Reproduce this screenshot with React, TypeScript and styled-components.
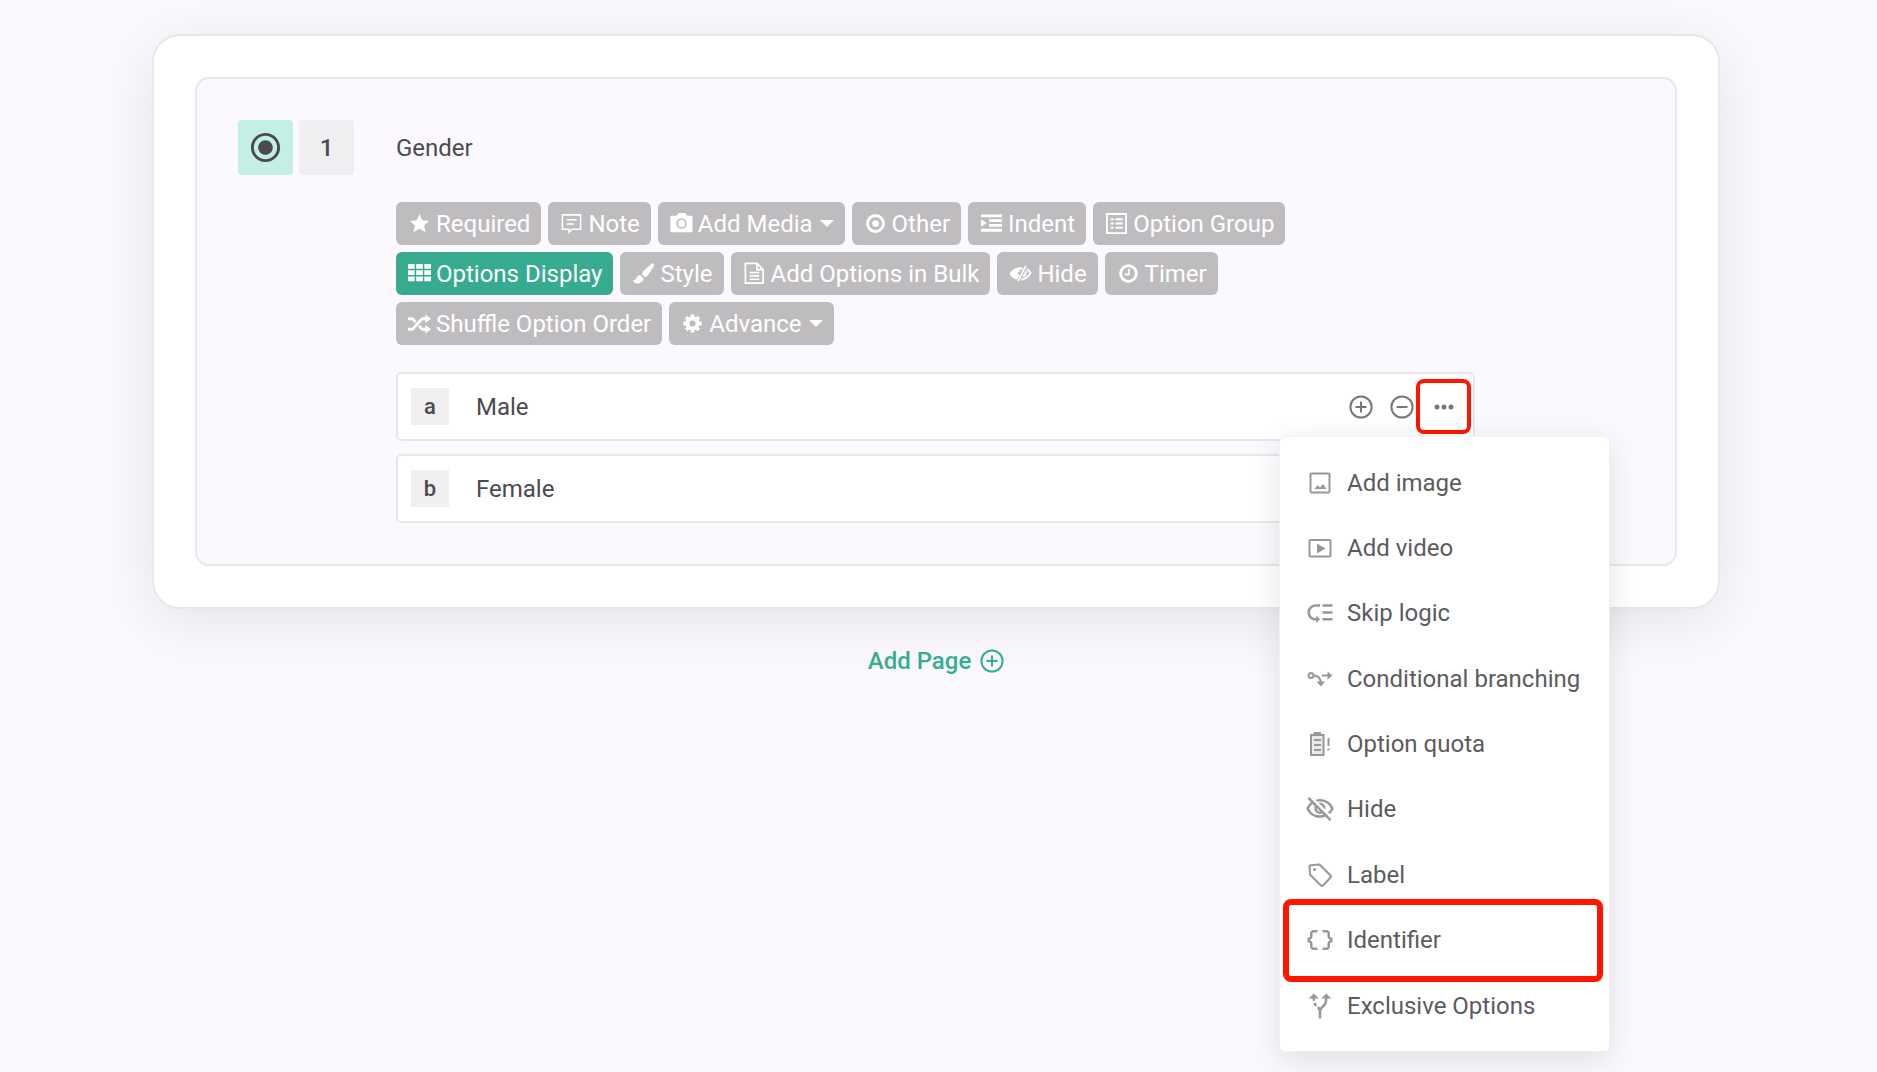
import React from "react";
import styled, { createGlobalStyle } from "styled-components";
import {
  MdAltRoute,
  MdDataObject,
  MdLowPriority,
  MdOutlineVisibilityOff,
  MdRadioButtonChecked,
} from "react-icons/md";

const colors = {
  page: "#fbf9fd",
  line: "#e9e7eb",
  tile: "#f0eef1",
  mint: "#c4efe5",
  green: "#35ad92",
  greenButton: "#36ab90",
  grey: "#bfbcc0",
  text: "#4b4a4f",
  menuText: "#5c5b5f",
  menuIcon: "#98979a",
  highlight: "#ff1500",
};

const GlobalStyle = createGlobalStyle`
  *, *::before, *::after { box-sizing: border-box; }
  body {
    margin: 0;
    background: ${colors.page};
    color: ${colors.text};
    font-family: Roboto, "Liberation Sans", sans-serif;
    font-size: 24px;
    line-height: 28px;
  }
  button, input { font: inherit; color: inherit; }
  button { cursor: pointer; }
`;

const Page = styled.main`
  min-height: 100vh;
  padding: 34px 157px 34px 152px;
  display: flex;
  flex-direction: column;
  align-items: center;
`;

const Card = styled.section`
  width: 100%;
  padding: 41px;
  border: 2px solid ${colors.line};
  border-radius: 28px;
  background: #fff;
  box-shadow: 0 12px 60px rgba(0, 0, 0, 0.09);
`;

const Question = styled.article`
  padding: 41px 200px 41px 41px;
  display: grid;
  grid-template-columns: auto 1fr;
  column-gap: 42px;
  border: 2px solid ${colors.line};
  border-radius: 14px;
  background: ${colors.page};
`;

const Tiles = styled.div`
  display: flex;
  gap: 6px;
`;

const Tile = styled.span<{ $active?: boolean }>`
  width: 55px;
  height: 55px;
  display: grid;
  place-items: center;
  border-radius: 4px;
  background: ${(p) => (p.$active ? colors.mint : colors.tile)};
  font-weight: 500;
`;

const Body = styled.div`
  min-width: 0;
`;

const Title = styled.h1`
  margin: 0 0 25px;
  font-size: 24px;
  font-weight: 400;
  line-height: 57px;
`;

const Toolbar = styled.div`
  display: flex;
  flex-wrap: wrap;
  gap: 7px;
`;

const ToolButton = styled.button<{ $active?: boolean }>`
  height: 43px;
  padding: 0 11px 0 12px;
  display: inline-flex;
  align-items: center;
  gap: 5px;
  border: 0;
  border-radius: 6px;
  background: ${(p) => (p.$active ? colors.greenButton : colors.grey)};
  color: #fff;
  white-space: nowrap;
`;

const ToolIcon = styled.svg`
  width: 23px;
  height: 23px;
  flex: none;
`;

const Caret = styled.span`
  margin-left: 2px;
  border: 7px solid transparent;
  border-top-color: #fff;
  border-bottom: 0;
`;

const Options = styled.ul`
  margin: 27px 0 0;
  padding: 0;
  display: grid;
  gap: 13px;
  list-style: none;
`;

const Option = styled.li`
  position: relative;
  height: 69px;
  padding: 0 2px 0 13px;
  display: flex;
  align-items: center;
  border: 2px solid ${colors.line};
  border-radius: 5px;
  background: #fff;
`;

const Letter = styled.label`
  width: 38px;
  height: 37px;
  display: grid;
  place-items: center;
  background: ${colors.tile};
  font-size: 22px;
  font-weight: 500;
`;

const OptionInput = styled.input`
  flex: 1;
  min-width: 0;
  margin-left: 27px;
  padding: 0;
  border: 0;
  outline: 0;
  background: transparent;
`;

const RoundButton = styled.button`
  width: 41px;
  height: 41px;
  padding: 0;
  display: grid;
  place-items: center;
  border: 0;
  background: transparent;
  color: #77767a;
`;

const MoreButton = styled(RoundButton)`
  width: 55px;
  height: 55px;
  margin-left: -6px;
  border: 4px solid ${colors.highlight};
  border-radius: 8px;
`;

const Menu = styled.div`
  position: absolute;
  z-index: 2;
  top: 62px;
  right: -137px;
  width: 331px;
  height: 616px;
  padding: 13px 0;
  display: flex;
  flex-direction: column;
  justify-content: space-between;
  border: 1px solid #f1f0f2;
  border-radius: 6px;
  background: #fff;
  box-shadow: 0 8px 32px rgba(0, 0, 0, 0.11);
`;

const MenuItem = styled.button<{ $marked?: boolean }>`
  position: relative;
  width: 100%;
  height: 65px;
  padding: 0 0 0 25px;
  display: flex;
  align-items: center;
  gap: 12px;
  border: 0;
  background: transparent;
  color: ${colors.menuText};
  text-align: left;
  white-space: nowrap;

  > svg {
    width: 30px;
    height: 30px;
    flex: none;
    color: ${colors.menuIcon};
  }

  &::after {
    content: ${(p) => (p.$marked ? '""' : "none")};
    position: absolute;
    inset: -9px 6px -9px 3px;
    border: 6px solid ${colors.highlight};
    border-radius: 8px;
  }
`;

const AddPage = styled.button`
  margin-top: 38px;
  padding: 0;
  display: inline-flex;
  align-items: center;
  gap: 9px;
  border: 0;
  background: transparent;
  color: ${colors.green};
  font-weight: 500;
`;

const CircleIcon = ({ size = 24, minus = false }: { size?: number; minus?: boolean }) => (
  <svg width={size} height={size} viewBox="0 0 24 24" fill="none" stroke="currentColor" strokeWidth="2">
    <circle cx="12" cy="12" r="10.6" />
    <path d={minus ? "M6.5 12h11" : "M6.5 12h11M12 6.5v11"} />
  </svg>
);

type Tool = { label: string; icon: React.ReactNode; active?: boolean; caret?: boolean };

const tools: Tool[] = [
  {
    label: "Required",
    icon: <path fill="currentColor" d="m12 2 3 6.6 7 .8-5.200 4.700 1.500 7L12 17.400 5.700 21.100l1.500-7L2 9.400l7-.8z" />,
  },
  {
    label: "Note",
    icon: (
      <g fill="none" stroke="currentColor" strokeWidth="1.6">
        <path d="M2.500 3h19v15h-9l-3 3v-3h-7z" />
        <path d="M7 8h10.500M7 12.500h7.500" />
      </g>
    ),
  },
  {
    label: "Add Media",
    caret: true,
    icon: (
      <path
        fill="currentColor"
        fillRule="evenodd"
        d="M2 4h5l2-3h7l2 3h4q1.500 0 1.500 1.500v14Q23.500 21 22 21H2Q.5 21 .5 19.500v-14Q.5 4 2 4zm10 2.500a5.500 5.500 0 1 0 0 11 5.500 5.500 0 0 0 0-11zm0 1.700a3.800 3.800 0 1 1 0 7.600 3.800 3.800 0 0 1 0-7.600z"
      />
    ),
  },
  {
    label: "Other",
    icon: (
      <>
        <circle cx="12" cy="12" r="8.300" fill="none" stroke="currentColor" strokeWidth="3" />
        <circle cx="12" cy="12" r="3.500" fill="currentColor" />
      </>
    ),
  },
  {
    label: "Indent",
    icon: (
      <path
        fill="currentColor"
        d="M1 2.500h22v3H1zM9.500 7.500H23v3H9.500zM9.500 12.500H23v3H9.500zM1 17.500h22v3H1zM1 7.500l6 4-6 4z"
      />
    ),
  },
  {
    label: "Option Group",
    icon: (
      <g fill="none" stroke="currentColor" strokeWidth="2">
        <path d="M2 2h20v20H2z" />
        <path d="M6 7.500h3M11 7.500h7.500M6 12h3M11 12h7.500M6 16.500h3M11 16.500h7.500" />
      </g>
    ),
  },
  {
    label: "Options Display",
    active: true,
    icon: (
      <path
        fill="currentColor"
        d="M0 2h7v5H0zM8.500 2h7v5h-7zM17 2h7v5h-7zM0 8.500h7v5H0zM8.500 8.500h7v5h-7zM17 8.500h7v5h-7zM0 15h7v5H0zM8.500 15h7v5h-7zM17 15h7v5h-7z"
      />
    ),
  },
  {
    label: "Style",
    icon: (
      <path
        fill="currentColor"
        d="M22.500 1.500q1.500 1 0 3.500l-6 9q-1.500 2-3.500 1.500l-2.500-2.500q-.5-1.500 1-3l8-7.500q2-1.700 3-1zM8.500 13.500l3.500 3.500c0 4-3.500 5.500-6.500 5.500-2.500 0-4-1.500-4.500-4 2 .7 3.200-.3 3.700-2 .6-2 2-3 3.800-3z"
      />
    ),
  },
  {
    label: "Add Options in Bulk",
    icon: (
      <g fill="none" stroke="currentColor" strokeWidth="1.800">
        <path d="M2.500 1.500h12L21 8v14H2.500zM14.500 1.500V8H21" />
        <path d="M7 11h10M7 14.500h10M7 18h10" />
      </g>
    ),
  },
  {
    label: "Hide",
    icon: (
      <>
        <path
          fill="currentColor"
          d="M.5 12q4.500-6.500 11-6.500 1.700 0 3 .4L13.500 8q-1-.4-2-.2l-.5 2q-2 .2-2 2.200l2 1.500-3 5Q3 17 .5 12z"
        />
        <path
          fill="none"
          stroke="currentColor"
          strokeWidth="2"
          d="M17.500 4 9.500 20M18.500 7.500q2.500 1.500 4 4-3.500 6-9.500 7M17.500 9.500q.5 4-3 5.500"
        />
      </>
    ),
  },
  {
    label: "Timer",
    icon: (
      <g fill="none" stroke="currentColor">
        <circle cx="12" cy="12" r="8.200" strokeWidth="3" />
        <path strokeWidth="1.800" d="M12.500 7v6H8" />
      </g>
    ),
  },
  {
    label: "Shuffle Option Order",
    icon: (
      <>
        <path
          fill="none"
          stroke="currentColor"
          strokeWidth="3"
          d="M0 7h3.500q1.500 0 2.500 1.300l2 2.200M11.500 14.500l2 2.200q1 1.300 2.500 1.300h3M0 18h3.500q1.500 0 2.500-1.300l7.500-8.400Q14.500 7 16 7h3"
        />
        <path fill="currentColor" d="m18 2.500 6 4.500-6 4.500zM18 13.500l6 4.500-6 4.500z" />
      </>
    ),
  },
  {
    label: "Advance",
    caret: true,
    icon: (
      <>
        <circle cx="12" cy="12" r="5.300" fill="none" stroke="currentColor" strokeWidth="4.200" />
        <path
          fill="none"
          stroke="currentColor"
          strokeWidth="4"
          d="M12 2.500v4M12 17.500v4M2.500 12h4M17.500 12h4M5.300 5.300l2.800 2.800M15.900 15.900l2.800 2.800M5.300 18.700l2.800-2.800M15.900 8.100l2.800-2.800"
        />
      </>
    ),
  },
];

const ImageIcon = () => (
  <svg viewBox="0 0 30 30">
    <rect x="5.500" y="5.500" width="19" height="19" rx="1" fill="none" stroke="currentColor" strokeWidth="2" />
    <path fill="currentColor" d="m9.500 21 3-4 2.500 2.500 3-3.500 3.500 5z" />
  </svg>
);

const VideoIcon = () => (
  <svg viewBox="0 0 30 30">
    <rect x="4.500" y="7" width="21" height="16.500" rx="1" fill="none" stroke="currentColor" strokeWidth="2" />
    <path fill="currentColor" d="m12 10.500 8.500 5-8.500 5z" />
  </svg>
);

const BranchIcon = () => (
  <svg viewBox="0 0 30 30" fill="none" stroke="currentColor" strokeWidth="2">
    <circle cx="6" cy="11.500" r="2.500" />
    <path d="M8.500 11.500q7 0 7.500 8M17 11.500h8" />
    <path fill="currentColor" stroke="none" d="m22.500 7.500 5 4-5 4zM11.500 17.500h8.500l-4 5z" />
  </svg>
);

const QuotaIcon = () => (
  <svg viewBox="0 0 30 30" fill="none" stroke="currentColor" strokeWidth="2">
    <rect x="6" y="6" width="12.500" height="20" fill="#98979a33" />
    <path strokeWidth="3" d="M8.500 4.500h7.500" />
    <path d="M9 11h7M9 16h7M9 21h7M23.500 9v8M23.500 19.500v2" />
  </svg>
);

const TagIcon = () => (
  <svg viewBox="0 0 30 30" fill="none" stroke="currentColor" strokeWidth="2" strokeLinejoin="round">
    <path d="M4.500 5.500 13.500 4.500q1 0 1.800.8L25.500 15.500q1 1 0 2L18 25.500q-1 1-2 0L5 14.500z" />
    <circle cx="9.500" cy="9.500" r="1.500" fill="currentColor" stroke="none" />
  </svg>
);

const menu: { label: string; icon: React.ReactNode; marked?: boolean }[] = [
  { label: "Add image", icon: <ImageIcon /> },
  { label: "Add video", icon: <VideoIcon /> },
  { label: "Skip logic", icon: <MdLowPriority /> },
  { label: "Conditional branching", icon: <BranchIcon /> },
  { label: "Option quota", icon: <QuotaIcon /> },
  { label: "Hide", icon: <MdOutlineVisibilityOff /> },
  { label: "Label", icon: <TagIcon /> },
  { label: "Identifier", icon: <MdDataObject />, marked: true },
  { label: "Exclusive Options", icon: <MdAltRoute /> },
];

export default function App() {
  return (
    <>
      <GlobalStyle />
      <Page>
        <Card>
          <Question>
            <Tiles>
              <Tile $active>
                <MdRadioButtonChecked size={35} />
              </Tile>
              <Tile>1</Tile>
            </Tiles>
            <Body>
              <Title>Gender</Title>
              <Toolbar>
                {tools.map((t) => (
                  <ToolButton key={t.label} type="button" $active={t.active}>
                    <ToolIcon viewBox="0 0 24 24" aria-hidden="true">
                      {t.icon}
                    </ToolIcon>
                    {t.label}
                    {t.caret && <Caret />}
                  </ToolButton>
                ))}
              </Toolbar>
              <Options>
                <Option>
                  <Letter htmlFor="option-a">a</Letter>
                  <OptionInput id="option-a" defaultValue="Male" />
                  <RoundButton type="button" aria-label="Add option">
                    <CircleIcon />
                  </RoundButton>
                  <RoundButton type="button" aria-label="Remove option">
                    <CircleIcon minus />
                  </RoundButton>
                  <MoreButton type="button" aria-label="More actions" aria-expanded="true">
                    <svg width="20" height="6" viewBox="0 0 20 6" fill="currentColor">
                      <circle cx="3" cy="3" r="2.500" />
                      <circle cx="10" cy="3" r="2.500" />
                      <circle cx="17" cy="3" r="2.500" />
                    </svg>
                  </MoreButton>
                  <Menu role="menu">
                    {menu.map((m) => (
                      <MenuItem key={m.label} type="button" role="menuitem" $marked={m.marked}>
                        {m.icon}
                        {m.label}
                      </MenuItem>
                    ))}
                  </Menu>
                </Option>
                <Option>
                  <Letter htmlFor="option-b">b</Letter>
                  <OptionInput id="option-b" defaultValue="Female" />
                </Option>
              </Options>
            </Body>
          </Question>
        </Card>
        <AddPage type="button">
          Add Page
          <CircleIcon />
        </AddPage>
      </Page>
    </>
  );
}
